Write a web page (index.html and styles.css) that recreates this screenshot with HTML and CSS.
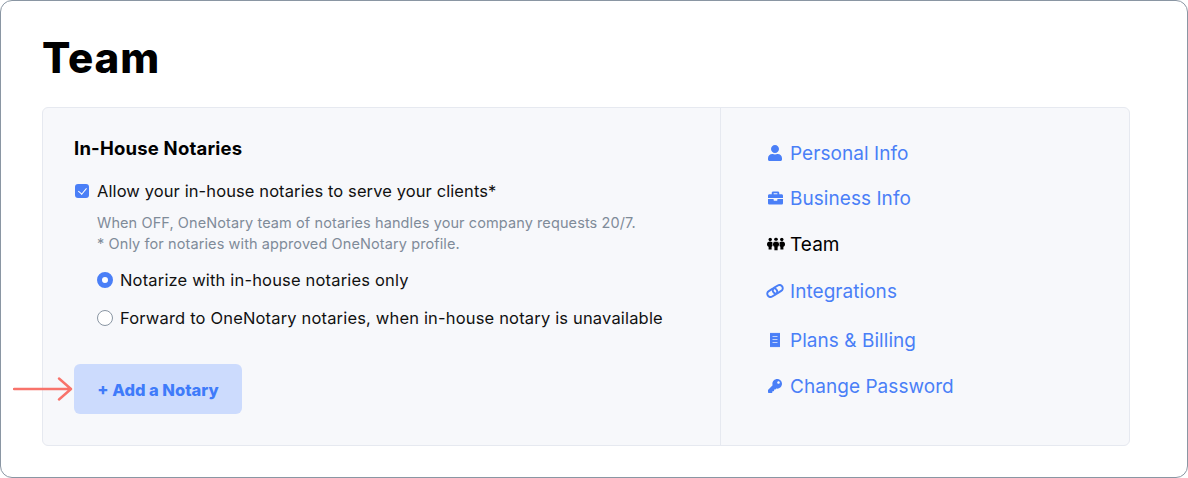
FILE: index.html
```html
<!DOCTYPE html>
<html lang="en">
<head>
    <meta charset="UTF-8">
    <meta name="viewport" content="width=device-width, initial-scale=1.0">
    <title>Team</title>
    <link rel="stylesheet" href="styles.css">
</head>
<body>
    <div class="frame">
        <h1 class="page-title">Team</h1>
        <div class="card">
            <section class="main">
                <h2 class="section-title">In-House Notaries</h2>
                <label class="check-row">
                    <input type="checkbox" class="check" checked>
                    <span>Allow your in-house notaries to serve your clients*</span>
                </label>
                <div class="options">
                    <p class="hint">When OFF, OneNotary team of notaries handles your company requests 20/7.<br>* Only for notaries with approved OneNotary profile.</p>
                    <label class="radio-row">
                        <input type="radio" name="mode" class="radio" checked>
                        <span>Notarize with in-house notaries only</span>
                    </label>
                    <label class="radio-row">
                        <input type="radio" name="mode" class="radio">
                        <span>Forward to OneNotary notaries, when in-house notary is unavailable</span>
                    </label>
                </div>
                <div class="add-row">
                    <!-- annotation arrow -->
                    <svg class="arrow" width="60" height="26" viewBox="0 0 60 26" fill="none" stroke="#f8736b" stroke-width="2.4" stroke-linecap="round" stroke-linejoin="round">
                        <path d="M1 13H57M46 2.500L58 13L46 23.500"/>
                    </svg>
                    <button class="add-btn">+ Add a Notary</button>
                </div>
            </section>
            <nav class="side">
                <a class="side-link link-personal" href="#">
                    <svg class="icon" viewBox="0 0 448 512" width="14" height="16"><path d="M224 256c70.7 0 128-57.3 128-128S294.7 0 224 0 96 57.3 96 128s57.3 128 128 128zm89.6 32h-16.7c-22.2 10.2-46.9 16-72.9 16s-50.6-5.8-72.9-16h-16.7C60.2 288 0 348.2 0 422.4V464c0 26.5 21.5 48 48 48h352c26.5 0 48-21.5 48-48v-41.6c0-74.2-60.2-134.4-134.4-134.4z"/></svg>
                    Personal Info
                </a>
                <a class="side-link link-business" href="#">
                    <svg class="icon" viewBox="0 0 512 512" width="15" height="15"><path d="M320 336c0 8.84-7.16 16-16 16h-96c-8.84 0-16-7.16-16-16v-48H0v144c0 25.6 22.4 48 48 48h416c25.6 0 48-22.4 48-48V288H320v48zm144-208h-80V80c0-25.6-22.4-48-48-48H176c-25.6 0-48 22.4-48 48v48H48c-25.6 0-48 22.4-48 48v80h512v-80c0-25.6-22.4-48-48-48zm-144 0H192V96h128v32z"/></svg>
                    Business Info
                </a>
                <a class="side-link active link-team" href="#">
                    <svg class="icon" viewBox="0 0 18 13" width="18" height="13">
                        <circle cx="3.200" cy="2" r="1.700"/><circle cx="9" cy="1.800" r="1.800"/><circle cx="14.800" cy="2" r="1.700"/>
                        <ellipse cx="3" cy="6.800" rx="3" ry="2.700"/><rect x="1.600" y="8" width="3" height="4"/>
                        <ellipse cx="15" cy="6.800" rx="3" ry="2.700"/><rect x="13.400" y="8" width="3" height="4"/>
                        <ellipse cx="9" cy="6.800" rx="3.600" ry="3.100" stroke="#f7f8fb" stroke-width=".7"/><rect x="7.400" y="8" width="3.200" height="5"/>
                    </svg>
                    Team
                </a>
                <a class="side-link link-integrations" href="#">
                    <svg class="icon" viewBox="0 0 18 14" width="18" height="14" fill="none" stroke="currentColor" stroke-width="2">
                        <rect x="1" y="5.500" width="10.500" height="6.400" rx="3.200" transform="rotate(-32 6.250 8.700)"/>
                        <rect x="6.500" y="2.100" width="10.500" height="6.400" rx="3.200" transform="rotate(-32 11.750 5.300)"/>
                    </svg>
                    Integrations
                </a>
                <a class="side-link link-billing" href="#">
                    <svg class="icon" viewBox="0 0 10 15" width="10" height="15">
                        <path d="M0 0l1 .7L2 0l1 .7L4 0l1 .7L6 0l1 .7L8 0l1 .7L10 0v15l-1-.7L8 15l-1-.7L6 15l-1-.7L4 15l-1-.7L2 15l-1-.7L0 15z"/>
                        <path d="M2.500 4h5M2.500 7h5M2.500 10h5" stroke="#f7f8fb" stroke-width="1.200" fill="none" opacity=".7"/>
                    </svg>
                    Plans &amp; Billing
                </a>
                <a class="side-link link-password" href="#">
                    <svg class="icon" viewBox="0 0 512 512" width="14" height="14"><path d="M512 176.001C512 273.203 433.202 352 336 352c-11.22 0-22.19-1.062-32.827-3.069l-24.012 27.014A23.999 23.999 0 0 1 261.223 384H224v40c0 13.255-10.745 24-24 24h-40v40c0 13.255-10.745 24-24 24H24c-13.255 0-24-10.745-24-24v-78.059c0-6.365 2.529-12.47 7.029-16.971l161.802-161.802C163.108 213.814 160 195.271 160 176 160 78.798 238.797.001 335.999 0 433.488-.001 512 78.511 512 176.001zM336 128c0 26.51 21.49 48 48 48s48-21.49 48-48-21.49-48-48-48-48 21.49-48 48z"/></svg>
                    Change Password
                </a>
            </nav>
        </div>
    </div>
</body>
</html>
```

FILE: styles.css
```css
*{
    padding: 0;
    margin: 0;
    box-sizing: border-box;
    font-family: "Inter","Liberation Sans",sans-serif;
}
body{
    width: 1188px;
    height: 478px;
    background: #ffffff;
    overflow: hidden;
}
.frame{
    width: 1188px;
    height: 478px;
    border: 1px solid #8a96a3;
    border-radius: 12px;
    padding: 32px 57px 31px 41px;
    display: flex;
    flex-direction: column;
    background: #ffffff;
}
.page-title{
    font-size: 42px;
    line-height: 50px;
    font-weight: 800;
    color: #000000;
    letter-spacing: 0.9px;
    margin-bottom: 24px;
}
.card{
    flex: 1;
    display: flex;
    background: #f7f8fb;
    border: 1px solid #e6e9f0;
    border-radius: 6px;
}
.main{
    width: 678px;
    padding: 27px 0 31px 31px;
    border-right: 1px solid #e6e9f0;
    display: flex;
    flex-direction: column;
}
.section-title{
    font-size: 18.5px;
    line-height: 26px;
    font-weight: 700;
    letter-spacing: 0.2px;
    color: #000000;
    margin-bottom: 18px;
}
.check-row, .radio-row{
    display: flex;
    align-items: center;
    font-size: 16.5px;
    letter-spacing: 0.1px;
    color: #111111;
    line-height: 24px;
}
.check-row{
    gap: 8px;
    padding-left: 1px;
}
.radio-row{
    gap: 7px;
    letter-spacing: 0.17px;
    margin-top: 14px;
}
.check{
    appearance: none;
    width: 14px;
    height: 14px;
    border-radius: 3px;
    background: #4a7ff7;
    position: relative;
}
.check::after{
    content: "";
    position: absolute;
    left: 4.5px;
    top: 2px;
    width: 3.5px;
    height: 7px;
    border: solid #ffffff;
    border-width: 0 1.5px 1.5px 0;
    transform: rotate(40deg);
}
.radio{
    appearance: none;
    width: 16px;
    height: 16px;
    border-radius: 50%;
    background: #ffffff;
    border: 1px solid #8a96a3;
}
.radio:checked{
    border: 5px solid #4a7ff7;
}
.options{
    padding-left: 23px;
    margin-top: 9px;
}
.hint{
    font-size: 14.5px;
    line-height: 21px;
    letter-spacing: 0.1px;
    color: #7f8b99;
}
.options .hint{
    margin-bottom: 13px;
}
.add-row{
    position: relative;
    margin-top: auto;
}
.arrow{
    position: absolute;
    left: -61px;
    top: 12px;
}
.add-btn{
    width: 168px;
    height: 50px;
    border: none;
    border-radius: 6px;
    background: #ccdbfd;
    color: #3f7bfa;
    font-size: 16.5px;
    font-weight: 800;
    padding-top: 1px;
}
.side{
    flex: 1;
    padding: 33px 0 0 46px;
    display: flex;
    flex-direction: column;
}
.side-link{
    display: flex;
    align-items: center;
    height: 24px;
    font-size: 19px;
    letter-spacing: 0.05px;
    color: #4a7ff7;
    text-decoration: none;
    position: relative;
    padding-left: 23px;
    white-space: nowrap;
}
.side-link + .side-link{
    margin-top: 21px;
}
.link-team{ margin-top: 22px !important; }
.link-integrations{ margin-top: 23px !important; }
.link-billing{ margin-top: 25px !important; }
.link-password{ margin-top: 22px !important; }
.side-link.active{
    color: #000000;
}
.icon{
    position: absolute;
    left: 1px;
    top: 50%;
    transform: translateY(-50%);
    fill: currentColor;
}
.link-team .icon{
    left: 0;
}
.link-integrations .icon{
    left: -1px;
    fill: none;
}
.link-billing .icon{
    left: 3px;
}
```
